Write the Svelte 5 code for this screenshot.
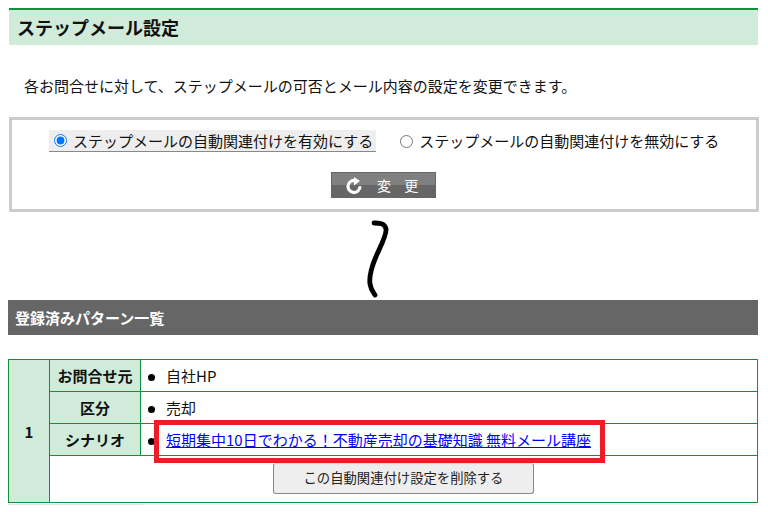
<script>
  let autoLink = 'on';
  const rows = [
    { label: 'お問合せ元', value: '自社HP' },
    { label: '区分', value: '売却' },
    { label: 'シナリオ', value: '短期集中10日でわかる\uFF01不動産売却の基礎知識 無料メール講座', href: '#' }
  ];
</script>

<main class="page">
  <h2 class="title">ステップメール設定</h2>
  <p class="lead">各お問合せに対して、ステップメールの可否とメール内容の設定を変更できます。</p>

  <form class="box" on:submit|preventDefault>
    <div class="radios">
      <label class="radio" class:active={autoLink === 'on'}>
        <input type="radio" bind:group={autoLink} value="on" />
        ステップメールの自動関連付けを有効にする
      </label>
      <label class="radio" class:active={autoLink === 'off'}>
        <input type="radio" bind:group={autoLink} value="off" />
        ステップメールの自動関連付けを無効にする
      </label>
    </div>
    <button type="submit" class="change">
      <svg width="17" height="17" viewBox="0 0 17 17" aria-hidden="true">
        <path d="M10.8 3.7 A6 6 0 1 0 15 9.3" fill="none" stroke="#fff" stroke-width="3.1" />
        <path d="M9 0 L15 4 L9 8.4 Z" fill="#fff" />
      </svg>
      <span>変 更</span>
    </button>
  </form>

  <h3 class="bar">登録済みパターン一覧</h3>

  <table class="patterns">
    <tbody>
      {#each rows as row, i}
        <tr>
          {#if i === 0}
            <th class="num" rowspan="4">1</th>
          {/if}
          <th class="label">{row.label}</th>
          <td>
            <ul>
              <li>
                {#if row.href}
                  <a href={row.href}>{row.value}</a>
                {:else}
                  {row.value}
                {/if}
              </li>
            </ul>
          </td>
        </tr>
      {/each}
      <tr>
        <td class="actions" colspan="2">
          <button type="button" class="delete">この自動関連付け設定を削除する</button>
        </td>
      </tr>
    </tbody>
  </table>
  <div class="next-row"></div>

  <!-- marks drawn over the screenshot -->
  <svg class="squiggle" width="30" height="85" viewBox="0 0 30 85" aria-hidden="true">
    <path d="M9 4 C14 4 20 4 21 10 C22 16 14 30 10 40 C6 50 4 58 5 65 C6 71 8 73 10 76" fill="none" stroke="#000" stroke-width="4.8" stroke-linecap="round" />
  </svg>
  <div class="highlight"></div>
</main>

<style>
  :global(body) {
    margin: 0;
    background: #fff;
  }

  .page {
    position: relative;
    height: 512px;
    overflow: hidden;
    box-sizing: border-box;
    padding: 8px 10px 0 8px;
    font-family: "Noto Sans CJK JP", "Noto Sans", sans-serif;
    font-size: 15px;
    color: #111;
  }

  .title {
    margin: 0 0 0 1px;
    height: 35px;
    line-height: 35px;
    padding-left: 8px;
    border-top: 2px solid #0d9439;
    background: #d0ebd9;
    font-size: 18px;
    font-weight: 700;
    color: #111;
  }

  .lead {
    margin: 0;
    padding: 28px 0 0 16px;
    height: 44px;
    line-height: 26px;
    font-size: 15px;
  }

  .box {
    box-sizing: border-box;
    margin: 0 -1px 0 1px;
    height: 95px;
    border: 3px solid #ccc;
    padding-top: 10px;
    text-align: center;
  }

  .radios {
    display: flex;
    align-items: center;
    gap: 19px;
    padding-left: 37px;
    height: 22px;
  }

  .radio {
    display: flex;
    align-items: center;
    height: 22px;
    padding: 0 3px;
    line-height: 22px;
    font-size: 15px;
    white-space: nowrap;
    box-sizing: border-box;
  }

  .radio.active {
    background: #eee;
    border-bottom: 1px solid #888;
  }

  .radio input {
    margin: 0 6px 0 2px;
    width: 13px;
    height: 13px;
  }

  .change {
    display: flex;
    align-items: center;
    box-sizing: border-box;
    width: 105px;
    height: 26px;
    margin: 20px 0 0 319px;
    padding: 0 0 0 13px;
    border: 1px solid #666;
    background: linear-gradient(#808080 0 50%, #666 50% 100%);
    color: #fff;
    font-family: inherit;
    font-size: 14px;
    cursor: pointer;
  }

  .change span {
    margin-left: 15px;
    word-spacing: 10px;
  }

  .bar {
    margin: 88px 0 0;
    height: 35px;
    line-height: 36px;
    padding-left: 7px;
    background: #666;
    color: #fff;
    font-size: 15px;
    font-weight: 700;
  }

  .patterns {
    width: 750px;
    margin-top: 24px;
    border-collapse: collapse;
    table-layout: fixed;
    border: 1px solid #0d9439;
    font-size: 15px;
  }

  .patterns th,
  .patterns td {
    border: 1px solid #0d9439;
    padding: 0;
    height: 31px;
  }

  .patterns th {
    background: #d0ebd9;
    font-weight: 700;
    color: #111;
  }

  .num {
    width: 40px;
  }

  .label {
    width: 90px;
  }

  ul {
    margin: 0;
    padding: 0 0 0 7px;
    list-style: none;
  }

  li {
    display: flex;
    align-items: center;
    gap: 11px;
  }

  li::before {
    content: '';
    width: 7px;
    height: 7px;
    margin-top: 3px;
    border-radius: 50%;
    background: #000;
  }

  a {
    color: #00f;
  }

  .actions {
    text-align: center;
    vertical-align: top;
  }

  .patterns td.actions {
    height: 46px;
    padding-right: 0;
  }

  .delete {
    box-sizing: border-box;
    display: block;
    width: 261px;
    height: 31px;
    margin: 7px 0 0 223px;
    padding: 0 0 2px;
    border: 1px solid #888;
    border-top-color: #ddd;
    border-radius: 3px;
    background: #eee;
    color: #222;
    font-family: inherit;
    font-size: 13.33px;
    cursor: pointer;
  }

  .next-row {
    height: 1px;
    margin-top: 1px;
    background: linear-gradient(90deg, #e4e4e4 0 135px, #f2f2f2 135px 100%);
  }

  .squiggle {
    position: absolute;
    left: 365px;
    top: 219px;
  }

  .highlight {
    position: absolute;
    left: 154px;
    top: 420px;
    box-sizing: border-box;
    width: 451px;
    height: 43px;
    border: 5px solid #ee1c25;
    pointer-events: none;
  }
</style>
